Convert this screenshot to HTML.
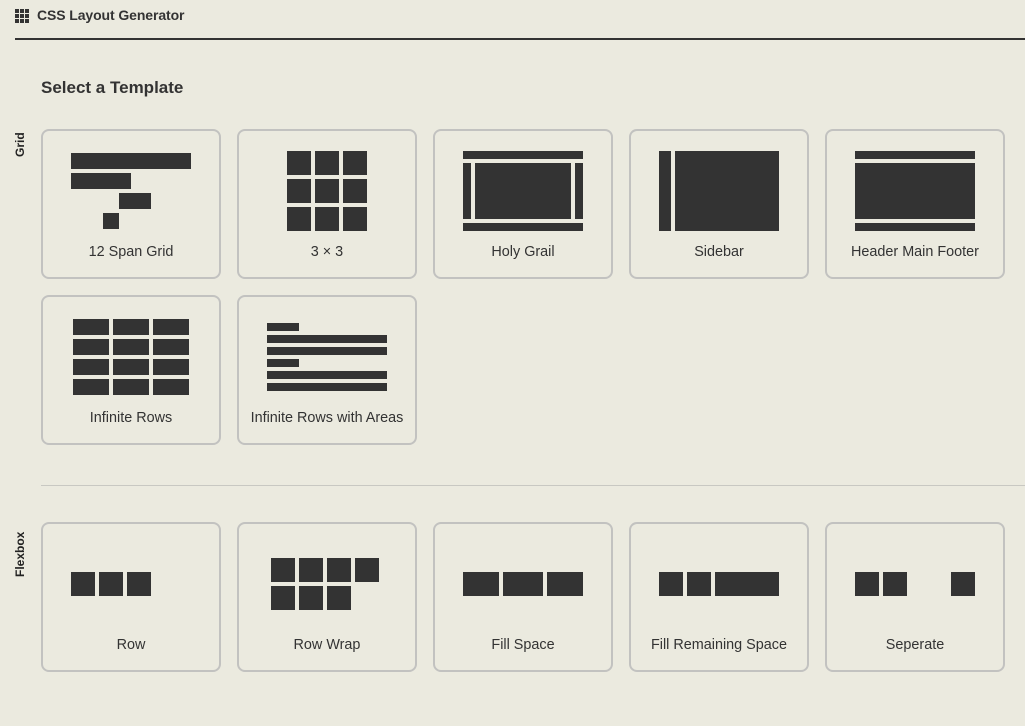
<!DOCTYPE html>
<html><head><meta charset="utf-8"><style>
body{margin:0;width:1025px;height:726px;background:#ebeadf;font-family:"Liberation Sans",sans-serif;color:#333;position:relative;overflow:hidden}
.a{position:absolute}
.card{position:absolute;width:176px;height:146px;border:2px solid #c2c2c0;border-radius:8px;box-sizing:content-box}
.lbl{position:absolute;width:180px;text-align:center;font-size:14.4px;color:#333}
.vl{position:absolute;transform:rotate(-90deg);transform-origin:left top;font-weight:bold;font-size:12px;color:#222}
</style></head><body>
<svg class="a" style="left:15px;top:9px" width="14" height="14"><g fill="#333"><rect x="0" y="0" width="4" height="4"/><rect x="5" y="0" width="4" height="4"/><rect x="10" y="0" width="4" height="4"/><rect x="0" y="5" width="4" height="4"/><rect x="5" y="5" width="4" height="4"/><rect x="10" y="5" width="4" height="4"/><rect x="0" y="10" width="4" height="4"/><rect x="5" y="10" width="4" height="4"/><rect x="10" y="10" width="4" height="4"/></g></svg>
<div class="a" style="left:37px;top:7px;font-size:14px;font-weight:bold;color:#333;letter-spacing:-0.1px">CSS Layout Generator</div>
<div class="a" style="left:15px;top:38px;width:1010px;height:2px;background:#333"></div>
<div class="a" style="left:41px;top:78px;font-size:17px;font-weight:bold;color:#333">Select a Template</div>
<div class="vl" style="left:13px;top:157px">Grid</div>
<div class="vl" style="left:13px;top:577px">Flexbox</div>
<div class="a" style="left:41px;top:485px;width:984px;height:1px;background:#c8c8c2"></div>

<div class="card" style="left:41px;top:129px"></div><div class="lbl" style="left:41px;top:244px">12 Span Grid</div>
<div class="card" style="left:237px;top:129px"></div><div class="lbl" style="left:237px;top:244px">3 × 3</div>
<div class="card" style="left:433px;top:129px"></div><div class="lbl" style="left:433px;top:244px">Holy Grail</div>
<div class="card" style="left:629px;top:129px"></div><div class="lbl" style="left:629px;top:244px">Sidebar</div>
<div class="card" style="left:825px;top:129px"></div><div class="lbl" style="left:825px;top:244px">Header Main Footer</div>
<div class="card" style="left:41px;top:295px"></div><div class="lbl" style="left:41px;top:410px">Infinite Rows</div>
<div class="card" style="left:237px;top:295px"></div><div class="lbl" style="left:237px;top:410px">Infinite Rows with Areas</div>
<div class="card" style="left:41px;top:522px"></div><div class="lbl" style="left:41px;top:637px">Row</div>
<div class="card" style="left:237px;top:522px"></div><div class="lbl" style="left:237px;top:637px">Row Wrap</div>
<div class="card" style="left:433px;top:522px"></div><div class="lbl" style="left:433px;top:637px">Fill Space</div>
<div class="card" style="left:629px;top:522px"></div><div class="lbl" style="left:629px;top:637px">Fill Remaining Space</div>
<div class="card" style="left:825px;top:522px"></div><div class="lbl" style="left:825px;top:637px">Seperate</div>

<svg class="a" style="left:0;top:0" width="1025" height="726"><g fill="#333">
<rect x="71" y="153" width="120" height="16"/><rect x="71" y="173" width="60" height="16"/><rect x="119" y="193" width="32" height="16"/><rect x="103" y="213" width="16" height="16"/>
<rect x="287" y="151" width="24" height="24"/><rect x="315" y="151" width="24" height="24"/><rect x="343" y="151" width="24" height="24"/>
<rect x="287" y="179" width="24" height="24"/><rect x="315" y="179" width="24" height="24"/><rect x="343" y="179" width="24" height="24"/>
<rect x="287" y="207" width="24" height="24"/><rect x="315" y="207" width="24" height="24"/><rect x="343" y="207" width="24" height="24"/>
<rect x="463" y="151" width="120" height="8"/><rect x="463" y="163" width="8" height="56"/><rect x="475" y="163" width="96" height="56"/><rect x="575" y="163" width="8" height="56"/><rect x="463" y="223" width="120" height="8"/>
<rect x="659" y="151" width="12" height="80"/><rect x="675" y="151" width="104" height="80"/>
<rect x="855" y="151" width="120" height="8"/><rect x="855" y="163" width="120" height="56"/><rect x="855" y="223" width="120" height="8"/>
<rect x="73" y="319" width="36" height="16"/><rect x="113" y="319" width="36" height="16"/><rect x="153" y="319" width="36" height="16"/>
<rect x="73" y="339" width="36" height="16"/><rect x="113" y="339" width="36" height="16"/><rect x="153" y="339" width="36" height="16"/>
<rect x="73" y="359" width="36" height="16"/><rect x="113" y="359" width="36" height="16"/><rect x="153" y="359" width="36" height="16"/>
<rect x="73" y="379" width="36" height="16"/><rect x="113" y="379" width="36" height="16"/><rect x="153" y="379" width="36" height="16"/>
<rect x="267" y="323" width="32" height="8"/><rect x="267" y="335" width="120" height="8"/><rect x="267" y="347" width="120" height="8"/><rect x="267" y="359" width="32" height="8"/><rect x="267" y="371" width="120" height="8"/><rect x="267" y="383" width="120" height="8"/>
<rect x="71" y="572" width="24" height="24"/><rect x="99" y="572" width="24" height="24"/><rect x="127" y="572" width="24" height="24"/>
<rect x="271" y="558" width="24" height="24"/><rect x="299" y="558" width="24" height="24"/><rect x="327" y="558" width="24" height="24"/><rect x="355" y="558" width="24" height="24"/>
<rect x="271" y="586" width="24" height="24"/><rect x="299" y="586" width="24" height="24"/><rect x="327" y="586" width="24" height="24"/>
<rect x="463" y="572" width="36" height="24"/><rect x="503" y="572" width="40" height="24"/><rect x="547" y="572" width="36" height="24"/>
<rect x="659" y="572" width="24" height="24"/><rect x="687" y="572" width="24" height="24"/><rect x="715" y="572" width="64" height="24"/>
<rect x="855" y="572" width="24" height="24"/><rect x="883" y="572" width="24" height="24"/><rect x="951" y="572" width="24" height="24"/>
</g></svg>
</body></html>
